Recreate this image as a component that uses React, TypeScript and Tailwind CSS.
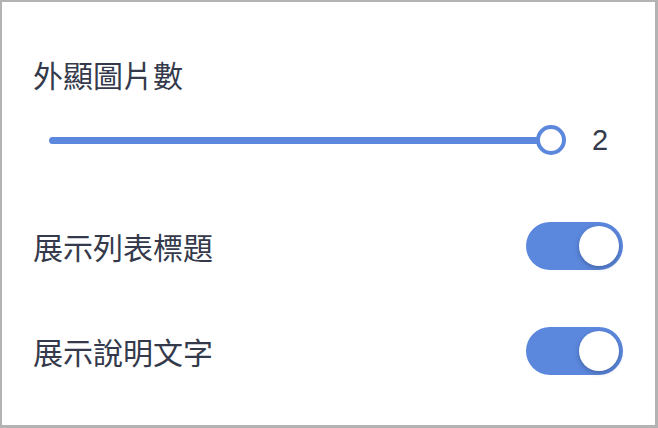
const font = { fontFamily: '"Noto Sans CJK TC", "Noto Sans", sans-serif' };

function Toggle() {
  return (
    <div className="w-[97px] h-[48px] rounded-full bg-[#5b87dd] flex items-center justify-end pr-[4px]">
      <div className="w-[40px] h-[40px] rounded-full bg-white shadow-[0_2px_5px_rgba(0,0,0,0.25)]" />
    </div>
  );
}

export default function App() {
  return (
    <div
      className="w-[658px] h-[428px] bg-white border-[#b3b3b3] border-t-2 border-l-2 border-r-[3px] border-b-[3px] flex flex-col pl-[31px] pr-[32px] pt-[52px] text-[#343a4b]"
      style={font}
    >
      <div className="text-[30px] leading-[40px]">外顯圖片數</div>

      <div className="mt-[26px] h-[40px] flex items-center">
        <div className="flex-1 pl-[16px] flex items-center">
          <div className="relative flex-1 h-[7px] rounded-full bg-[#5b87dd]">
            <div className="absolute right-[-15px] top-1/2 -translate-y-1/2 w-[30px] h-[30px] rounded-full bg-white border-[4px] border-[#5b87dd]" />
          </div>
        </div>
        <div
          className="w-[72px] pl-[41px] text-[29px] leading-[40px]"
          style={{ fontFamily: '"Liberation Sans", Arial, sans-serif' }}
        >
          2
        </div>
      </div>

      <div className="mt-[62px] h-[48px] flex items-center justify-between">
        <span className="text-[30px] leading-[40px]">展示列表標題</span>
        <Toggle />
      </div>

      <div className="mt-[57px] h-[48px] flex items-center justify-between">
        <span className="text-[30px] leading-[40px]">展示說明文字</span>
        <Toggle />
      </div>
    </div>
  );
}
